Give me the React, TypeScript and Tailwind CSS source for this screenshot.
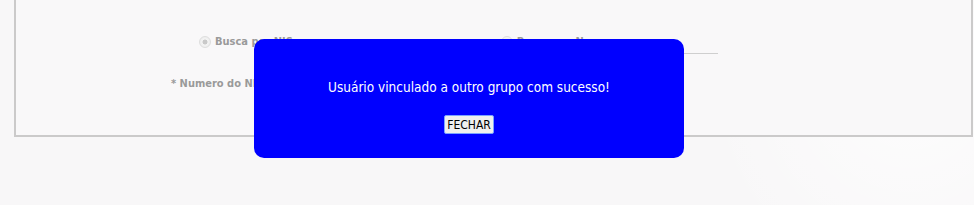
export default function App() {
  return (
    <div
      className="relative h-[205px] w-[974px] overflow-hidden bg-[#f8f7f8]"
      style={{ fontFamily: '"DejaVu Sans Condensed", "DejaVu Sans", sans-serif' }}
    >
      {/* subtle light swoosh in background */}
      <div className="pointer-events-none absolute left-[700px] top-[-120px] h-[420px] w-[420px] rounded-full bg-[radial-gradient(circle,rgba(255,255,255,0.7)_0%,rgba(255,255,255,0)_70%)]" />

      {/* form panel */}
      <div className="relative ml-[14px] h-[137px] w-[959px] border-x-2 border-b-2 border-[#cbcaca] bg-[#f9f8f9]">
        <div className="flex items-start pt-[35px]">
          <label className="ml-[183px] flex items-center gap-[4px] text-[11px] font-bold leading-[13px] text-[#9a9a9a]">
            <span className="h-[12px] w-[12px] rounded-full border border-[#dedede] bg-[radial-gradient(circle,#c9c9c9_0%,#c9c9c9_30%,#f4f4f4_40%,#e8e8e8_100%)]" />
            Busca por NIS
          </label>
          <label className="ml-[208px] flex items-center gap-[4px] text-[11px] font-bold leading-[13px] text-[#9a9a9a]">
            <span className="h-[12px] w-[12px] rounded-full border border-[#dedede] bg-[#f2f2f2]" />
            Busca por Nome
          </label>
          <div className="ml-[30px] mt-[18px] h-px w-[80px] bg-[#cfcfcf]" />
        </div>
        <div className="mt-[23px] flex items-center">
          <span className="ml-[155px] text-[11px] font-bold leading-[13px] text-[#9a9a9a]">* Numero do NIS</span>
        </div>
      </div>

      {/* modal */}
      <div className="absolute left-[254px] top-[39px] flex h-[119px] w-[430px] flex-col items-center rounded-[10px] bg-[#0000ff]">
        <p className="mt-[40px] text-[13.5px] leading-[16px] text-white">
          Usuário vinculado a outro grupo com sucesso!
        </p>
        <button className="mt-[20px] h-[19px] w-[50px] rounded-[2px] border border-[#7aa2ff] bg-[#efefef] text-[12px] leading-[16px] text-black">
          FECHAR
        </button>
      </div>
    </div>
  );
}
